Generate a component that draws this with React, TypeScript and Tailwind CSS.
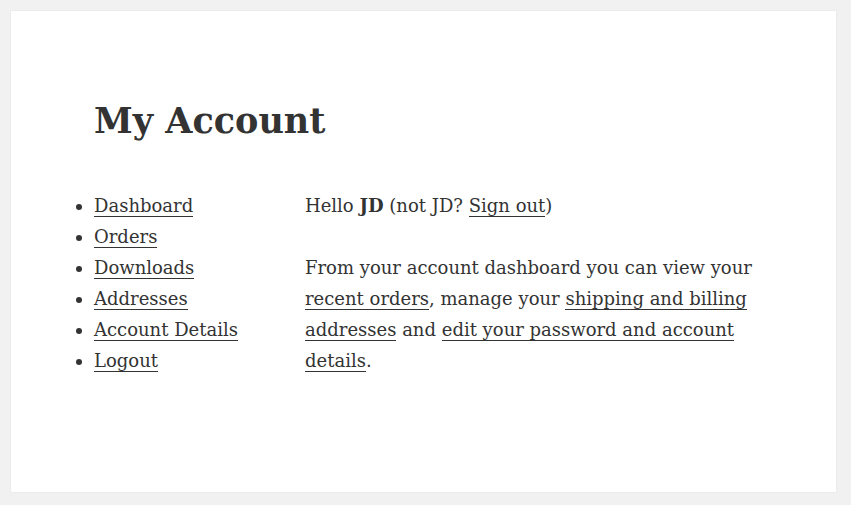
const navItems = ["Dashboard", "Orders", "Downloads", "Addresses", "Account Details", "Logout"];

const linkCls = "border-b border-[#333333] text-[#333333]";

export default function App() {
  return (
    <div className="min-h-[505px] bg-[#f1f1f1] pl-[11px] pt-[11px] font-['DejaVu_Serif',serif] text-[#333333]">
      <div className="h-[481px] w-[825px] bg-white pl-[83px] pt-[88px] shadow-[0_0_1px_rgba(0,0,0,0.15)]">
        <h1 className="text-[35px] font-bold leading-[43px]">My Account</h1>
        <div className="mt-[48px] flex text-[18px] leading-[31px]">
          <ul className="w-[211px] shrink-0 list-disc">
            {navItems.map((item) => (
              <li key={item}>
                <a href="#" className={linkCls}>
                  {item}
                </a>
              </li>
            ))}
          </ul>
          <div className="w-[460px]">
            <p className="mb-[31px]">
              Hello <strong>JD</strong> (not JD?{" "}
              <a href="#" className={linkCls}>
                Sign out
              </a>
              )
            </p>
            <p>
              From your account dashboard you can view your{" "}
              <a href="#" className={linkCls}>
                recent orders
              </a>
              , manage your{" "}
              <a href="#" className={linkCls}>
                shipping and billing addresses
              </a>{" "}
              and{" "}
              <a href="#" className={linkCls}>
                edit your password and account details
              </a>
              .
            </p>
          </div>
        </div>
      </div>
    </div>
  );
}
